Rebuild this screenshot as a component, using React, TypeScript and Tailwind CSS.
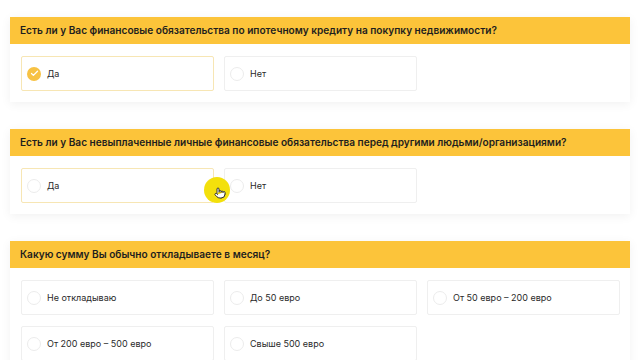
import React from 'react';
import { Check, Pointer } from 'lucide-react';

interface Question {
  title: string;
  options: string[];
  selected?: number;
  hovered?: number;
}

const questions: Question[] = [
  {
    title: 'Есть ли у Вас финансовые обязательства по ипотечному кредиту на покупку недвижимости?',
    options: ['Да', 'Нет'],
    selected: 0,
  },
  {
    title: 'Есть ли у Вас невыплаченные личные финансовые обязательства перед другими людьми/организациями?',
    options: ['Да', 'Нет'],
    hovered: 0,
  },
  {
    title: 'Какую сумму Вы обычно откладываете в месяц?',
    options: ['Не откладываю', 'До 50 евро', 'От 50 евро – 200 евро', 'От 200 евро – 500 евро', 'Свыше 500 евро'],
  },
];

const Option: React.FC<{ label: string; selected?: boolean; hovered?: boolean }> = ({ label, selected, hovered }) => (
  <div
    className={`flex h-[35px] items-center gap-[6px] rounded-[2px] border bg-white pl-[5px] ${
      selected || hovered ? 'border-[#f7e6b4]' : 'border-[#efefef]'
    }`}
  >
    {selected ? (
      <span className="flex h-[14px] w-[14px] items-center justify-center rounded-full bg-[#f7c244]">
        <Check className="h-[9px] w-[9px] text-white" strokeWidth={3.5} />
      </span>
    ) : (
      <span className="h-[14px] w-[14px] rounded-full border border-[#ececec] bg-white" />
    )}
    <span className="text-[9px] text-[#2a2a2a]">{label}</span>
  </div>
);

export default function App() {
  return (
    <div
      className="flex min-h-[360px] flex-col gap-[27px] bg-white px-[10px] pt-[17px]"
      style={{ fontFamily: 'Inter, "Noto Sans", sans-serif' }}
    >
      {questions.map((q, qi) => (
        <div key={qi} className="relative bg-white shadow-[0_2px_10px_rgba(0,0,0,0.06)]">
          <div className="flex h-[27px] items-center bg-[#fcc43a] px-[10px] text-[10.1px] font-semibold text-[#1e1e1e]">
            {q.title}
          </div>
          <div className="grid grid-cols-3 gap-x-[10px] gap-y-[11px] px-[11px] pb-[11px] pt-[12px] pr-[10px]">
            {q.options.map((o, oi) => (
              <Option key={oi} label={o} selected={q.selected === oi} hovered={q.hovered === oi} />
            ))}
          </div>
          {qi === 1 && (
            <div className="absolute left-[194px] top-[48px] flex h-[26px] w-[26px] items-center justify-center rounded-full bg-[#f3e00c]">
              <Pointer className="ml-[6px] mt-[6px] h-[12px] w-[12px] text-[#222]" fill="white" strokeWidth={1.8} />
            </div>
          )}
        </div>
      ))}
    </div>
  );
}
